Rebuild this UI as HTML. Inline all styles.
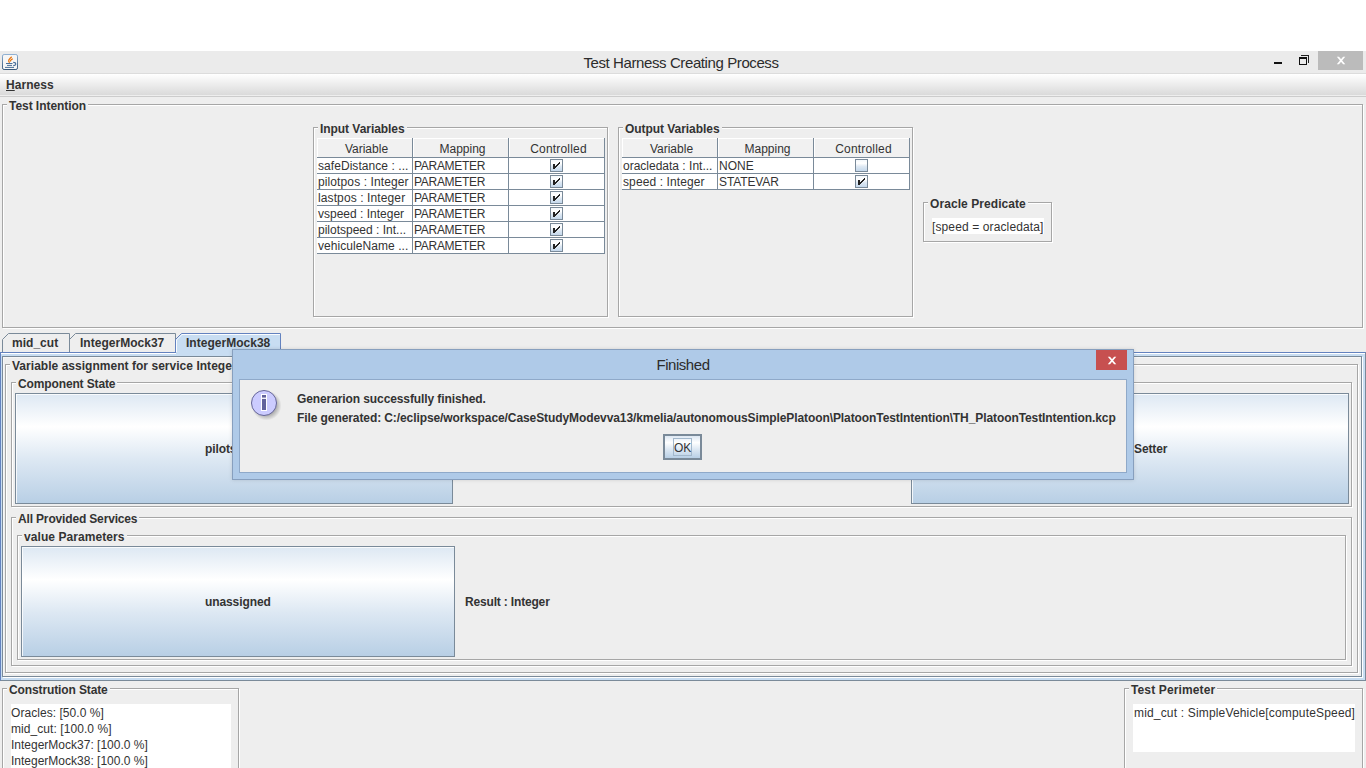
<!DOCTYPE html>
<html><head><meta charset="utf-8"><title>Test Harness Creating Process</title>
<style>
html,body{margin:0;padding:0;}
body{width:1366px;height:768px;overflow:hidden;background:#fff;position:relative;font:12px/16px "Liberation Sans",Arial,sans-serif;color:#333;}
div,span{box-sizing:border-box;}
.a{position:absolute;}
.win{position:absolute;left:0;top:51px;width:1366px;height:717px;background:#eee;}
.titlebar{position:absolute;left:0;top:51px;width:1366px;height:22px;background:#ebebeb;}
.wtitle{position:absolute;left:0;width:1362px;top:53px;text-align:center;font:15px/20px "Liberation Sans",Arial,sans-serif;color:#2c2c2c;letter-spacing:-0.4px;}
.menubar{position:absolute;left:0;top:73px;width:1366px;height:24px;background:linear-gradient(to bottom,#dcdcdc 0,#dcdcdc 1px,#ffffff 1px,#dadada 22px,#eeeeee 22px,#eeeeee 23px,#cccccc 23px);}
.g{position:absolute;border:1px solid #a6a6a6;box-shadow:1px 1px 0 #fff, inset 1px 1px 0 #fff;}
.t{position:absolute;letter-spacing:-0.05px;font-weight:bold;white-space:nowrap;background:#eee;padding:0 2px;height:16px;}
.b{position:absolute;letter-spacing:-0.1px;font-weight:bold;white-space:nowrap;}
.p{position:absolute;white-space:nowrap;}
.tbl{position:absolute;width:288px;}
.hdr{position:absolute;left:0;top:0;width:288px;height:20px;}
.h{position:absolute;top:0;height:20px;width:96px;text-align:center;line-height:16px;padding-top:3px;padding-left:4px;border-right:1px solid #7a8a99;border-bottom:1px solid #7a8a99;background:#f1f1f1;box-shadow:inset 1px 1px 0 #fff;}
.row{position:absolute;left:0;width:288px;height:16px;}
.c{position:absolute;top:0;height:16px;width:96px;background:#fff;border-right:1px solid #7a8a99;border-bottom:1px solid #7a8a99;padding-left:1px;white-space:nowrap;overflow:hidden;line-height:16px;}
.c1{left:0;} .c2{left:96px;} .c3{left:192px;}
.cb{position:absolute;left:41px;top:1px;width:13px;height:13px;border:1px solid #7a8a99;background:linear-gradient(to bottom,#f4f8fc 0%,#ffffff 30%,#dde8f3 60%,#c4d8ec 100%);}
.cb svg{position:absolute;left:-1px;top:-1px;}
.btn{position:absolute;border:1px solid #7a8a99;background:linear-gradient(to bottom,#dde8f3 0%,#ffffff 30%,#dde8f3 60%,#b8cfe5 100%);box-shadow:inset 1px 1px 0 rgba(255,255,255,.8);}
.white{position:absolute;background:#fff;}
</style></head><body>
<div class="win"></div>
<div class="titlebar"></div>
<!-- java icon -->
<svg class="a" style="left:0;top:50px" width="24" height="24" viewBox="0 50 24 24">
<defs><linearGradient id="jb" x1="0" y1="0" x2="0" y2="1"><stop offset="0" stop-color="#8fb0d2"/><stop offset="1" stop-color="#37587a"/></linearGradient></defs>
<rect x="2.5" y="54.5" width="15" height="15" rx="1.6" ry="1.6" fill="#f6f6f6" stroke="url(#jb)" stroke-width="1"/>
<path d="M9.6 62.8C7.8 61 8.6 59.4 11.7 56.7M10.6 61.6C10 60.2 11 59.6 12.8 58.8" stroke="#e8730a" stroke-width="1.25" fill="none"/>
<path d="M6 63.5h6.5M7 65.4h5M5 67.4h9" stroke="#4a7099" stroke-width="1" fill="none"/>
<path d="M13.2 62.4C16.6 62.5 16.6 65.5 13.2 65.6" stroke="#4a7099" stroke-width="1.1" fill="none"/>
</svg>
<div class="wtitle">Test Harness Creating Process</div>
<!-- window controls -->
<div class="a" style="left:1274px;top:62px;width:8px;height:2px;background:#111;"></div>
<div class="a" style="left:1301px;top:55px;width:8px;height:8px;border-top:1px solid #222;border-right:1px solid #222;"></div>
<div class="a" style="left:1299px;top:57px;width:8px;height:8px;border:1px solid #111;border-top-width:2px;background:#ebebeb;"></div>
<div class="a" style="left:1318px;top:51px;width:45px;height:19px;background:#bbbbbb;"></div>
<svg class="a" style="left:1335px;top:55px" width="12" height="12" viewBox="1335 55 12 12"><path d="M1336.8 56.8h2.2l6.3 7.4h-2.2zM1343.1 56.8h2.2l-6.3 7.4h-2.2z" fill="#fff"/></svg>
<div class="menubar"></div>
<div class="b" style="left:6px;top:77px;letter-spacing:.06px"><span style="text-decoration:underline">H</span>arness</div>

<!-- Test Intention -->
<div class="g" style="left:2px;top:104px;width:1361px;height:224px;"></div>
<div class="t" style="left:7px;top:98px;">Test Intention</div>
<div class="g" style="left:313px;top:127px;width:295px;height:190px;"></div>
<div class="t" style="left:318px;top:121px;">Input Variables</div>
<div class="tbl" style="left:317px;top:138px;"><div class="hdr"><div class="h c1">Variable</div><div class="h c2">Mapping</div><div class="h c3" style="letter-spacing:.2px">Controlled</div></div><div class="row" style="top:20px"><div class="c c1" style="letter-spacing:0.06px">safeDistance : ...</div><div class="c c2" style="letter-spacing:-0.3px">PARAMETER</div><div class="c c3"><span class="cb"><svg width="13" height="13" viewBox="0 0 13 13"><path d="M3 5h2v5h-2zM5 7h1v2h-1zM6 6h1v2h-1zM7 5h1v2h-1zM8 4h1v2h-1zM9 3h1v2h-1z" fill="#222"/></svg></span></div></div>
<div class="row" style="top:36px"><div class="c c1" style="letter-spacing:0.11px">pilotpos : Integer</div><div class="c c2" style="letter-spacing:-0.3px">PARAMETER</div><div class="c c3"><span class="cb"><svg width="13" height="13" viewBox="0 0 13 13"><path d="M3 5h2v5h-2zM5 7h1v2h-1zM6 6h1v2h-1zM7 5h1v2h-1zM8 4h1v2h-1zM9 3h1v2h-1z" fill="#222"/></svg></span></div></div>
<div class="row" style="top:52px"><div class="c c1" style="letter-spacing:0.11px">lastpos : Integer</div><div class="c c2" style="letter-spacing:-0.3px">PARAMETER</div><div class="c c3"><span class="cb"><svg width="13" height="13" viewBox="0 0 13 13"><path d="M3 5h2v5h-2zM5 7h1v2h-1zM6 6h1v2h-1zM7 5h1v2h-1zM8 4h1v2h-1zM9 3h1v2h-1z" fill="#222"/></svg></span></div></div>
<div class="row" style="top:68px"><div class="c c1">vspeed : Integer</div><div class="c c2" style="letter-spacing:-0.3px">PARAMETER</div><div class="c c3"><span class="cb"><svg width="13" height="13" viewBox="0 0 13 13"><path d="M3 5h2v5h-2zM5 7h1v2h-1zM6 6h1v2h-1zM7 5h1v2h-1zM8 4h1v2h-1zM9 3h1v2h-1z" fill="#222"/></svg></span></div></div>
<div class="row" style="top:84px"><div class="c c1">pilotspeed : Int...</div><div class="c c2" style="letter-spacing:-0.3px">PARAMETER</div><div class="c c3"><span class="cb"><svg width="13" height="13" viewBox="0 0 13 13"><path d="M3 5h2v5h-2zM5 7h1v2h-1zM6 6h1v2h-1zM7 5h1v2h-1zM8 4h1v2h-1zM9 3h1v2h-1z" fill="#222"/></svg></span></div></div>
<div class="row" style="top:100px"><div class="c c1" style="letter-spacing:0.06px">vehiculeName ...</div><div class="c c2" style="letter-spacing:-0.3px">PARAMETER</div><div class="c c3"><span class="cb"><svg width="13" height="13" viewBox="0 0 13 13"><path d="M3 5h2v5h-2zM5 7h1v2h-1zM6 6h1v2h-1zM7 5h1v2h-1zM8 4h1v2h-1zM9 3h1v2h-1z" fill="#222"/></svg></span></div></div></div>
<div class="g" style="left:618px;top:127px;width:295px;height:190px;"></div>
<div class="t" style="left:623px;top:121px;">Output Variables</div>
<div class="tbl" style="left:622px;top:138px;"><div class="hdr"><div class="h c1">Variable</div><div class="h c2">Mapping</div><div class="h c3" style="letter-spacing:.2px">Controlled</div></div><div class="row" style="top:20px"><div class="c c1">oracledata : Int...</div><div class="c c2">NONE</div><div class="c c3"><span class="cb"></span></div></div>
<div class="row" style="top:36px"><div class="c c1" style="letter-spacing:0.11px">speed : Integer</div><div class="c c2" style="letter-spacing:-0.12px">STATEVAR</div><div class="c c3"><span class="cb"><svg width="13" height="13" viewBox="0 0 13 13"><path d="M3 5h2v5h-2zM5 7h1v2h-1zM6 6h1v2h-1zM7 5h1v2h-1zM8 4h1v2h-1zM9 3h1v2h-1z" fill="#222"/></svg></span></div></div></div>
<div class="g" style="left:923px;top:202px;width:129px;height:40px;"></div>
<div class="t" style="left:928px;top:196px;letter-spacing:.07px">Oracle Predicate</div>
<div class="white" style="left:932px;top:218px;width:112px;height:16px;"></div>
<div class="p" style="left:932px;top:219px;letter-spacing:.12px">[speed = oracledata]</div>

<!-- tabs -->
<svg class="a" style="left:0;top:330px" width="300" height="27" viewBox="0 330 300 27">
<path d="M175.5 356V339.5l6-6H280.5V356z" fill="#c8ddf2"/>
<path d="M2.5 352V339.5l6-6H69.5V352" fill="none" stroke="#7a8a99"/>
<path d="M69.5 339.5l6-6H175.5V352" fill="none" stroke="#7a8a99"/>
<path d="M175.5 352V339.5l6-6H280.5V352" fill="none" stroke="#6382bf"/>
<path d="M176.5 352V340l5.5-5.5H280" fill="none" stroke="#fff" stroke-opacity=".9"/>
</svg>
<div class="b" style="left:12px;top:335px;letter-spacing:.02px">mid_cut</div>
<div class="b" style="left:80px;top:335px;letter-spacing:.02px">IntegerMock37</div>
<div class="b" style="left:186px;top:335px;letter-spacing:.02px">IntegerMock38</div>
<!-- tab content -->
<div class="a" style="left:0;top:352px;width:1366px;height:329px;background:#c8ddf2;border:1px solid #7a8a99;border-top-color:#6382bf;border-left-color:#6382bf;"></div>
<div class="a" style="left:1px;top:353px;width:1364px;height:1px;background:#fff;"></div>
<div class="a" style="left:176px;top:352px;width:105px;height:2px;background:#c8ddf2;"></div>
<div class="a" style="left:280px;top:352px;width:1px;height:1px;background:#6382bf;"></div>
<div class="a" style="left:2px;top:356px;width:1360px;height:321px;background:#eee;border:1px solid #7a8a99;box-shadow:1px 1px 0 #fff, inset 1px 1px 0 #f7f7f7;"></div>
<div class="g" style="left:5px;top:364px;width:1353px;height:309px;"></div>
<div class="t" style="left:10px;top:358px;letter-spacing:.03px">Variable assignment for service IntegerMock38</div>
<div class="g" style="left:11px;top:382px;width:1341px;height:125px;"></div>
<div class="t" style="left:16px;top:376px;letter-spacing:-.13px">Component State</div>
<div class="btn" style="left:15px;top:393px;width:438px;height:111px;"></div>
<div class="b" style="left:205px;top:441px;">pilotspeed</div>
<div class="btn" style="left:911px;top:393px;width:438px;height:111px;"></div>
<div class="b" style="left:1134px;top:441px;">Setter</div>
<div class="g" style="left:11px;top:517px;width:1341px;height:149px;"></div>
<div class="t" style="left:16px;top:511px;letter-spacing:-.16px">All Provided Services</div>
<div class="g" style="left:17px;top:535px;width:1329px;height:125px;"></div>
<div class="t" style="left:22px;top:529px;letter-spacing:.07px">value Parameters</div>
<div class="btn" style="left:21px;top:546px;width:434px;height:111px;"></div>
<div class="b" style="left:205px;top:594px;">unassigned</div>
<div class="b" style="left:465px;top:594px;letter-spacing:-.17px">Result : Integer</div>

<!-- bottom panels -->
<div class="g" style="left:2px;top:688px;width:237px;height:100px;"></div>
<div class="t" style="left:7px;top:682px;letter-spacing:-.12px">Constrution State</div>
<div class="white" style="left:11px;top:704px;width:220px;height:70px;"></div>
<div class="p" style="left:11px;top:705px;letter-spacing:.05px">Oracles: [50.0 %]</div>
<div class="p" style="left:11px;top:721px;letter-spacing:.07px">mid_cut: [100.0 %]</div>
<div class="p" style="left:11px;top:737px;">IntegerMock37: [100.0 %]</div>
<div class="p" style="left:11px;top:753px;">IntegerMock38: [100.0 %]</div>
<div class="g" style="left:1124px;top:688px;width:239px;height:100px;"></div>
<div class="t" style="left:1129px;top:682px;letter-spacing:.13px">Test Perimeter</div>
<div class="white" style="left:1133px;top:704px;width:222px;height:48px;"></div>
<div class="p" style="left:1134px;top:705px;letter-spacing:.17px">mid_cut : SimpleVehicle[computeSpeed]</div>

<!-- dialog -->
<div class="a" style="left:232px;top:349px;width:902px;height:131px;background:#afcae8;border:1px solid #879fbe;box-shadow:0 0 4px rgba(0,0,0,.13);"></div>
<div class="a" style="left:239px;top:379px;width:888px;height:94px;background:#eee;border:1px solid #8fa9c9;"></div>
<div class="a" style="left:232px;width:902px;top:355px;text-align:center;font:15px/20px 'Liberation Sans',Arial,sans-serif;color:#2c2c2c;letter-spacing:-0.45px">Finished</div>
<div class="a" style="left:1096px;top:350px;width:31px;height:20px;background:#c75050;"></div>
<svg class="a" style="left:1106px;top:355px" width="12" height="12" viewBox="1106 355 12 12"><path d="M1107.8 356.8h2.2l6.3 7.4h-2.2zM1114.1 356.8h2.2l-6.3 7.4h-2.2z" fill="#fff"/></svg>
<!-- info icon -->
<svg class="a" style="left:246px;top:385px" width="40" height="40" viewBox="246 385 40 40">
<defs><radialGradient id="sh" cx="50%" cy="50%" r="50%"><stop offset="0.6" stop-color="#000" stop-opacity=".3"/><stop offset="1" stop-color="#000" stop-opacity="0"/></radialGradient></defs>
<circle cx="266.5" cy="405.5" r="15" fill="url(#sh)"/>
<circle cx="264" cy="403" r="12.5" fill="#ccccff" stroke="#66669a" stroke-width="1"/>
<rect x="261" y="394" width="6" height="17" fill="#fff"/>
<rect x="262" y="395" width="4" height="2.6" fill="#62639c"/>
<rect x="262" y="398.9" width="4" height="11.1" fill="#62639c"/>
</svg>
<div class="b" style="left:297px;top:391px;">Generarion successfully finished.</div>
<div class="b" style="left:297px;top:410px;letter-spacing:-0.087px">File generated: C:/eclipse/workspace/CaseStudyModevva13/kmelia/autonomousSimplePlatoon\PlatoonTestIntention\TH_PlatoonTestIntention.kcp</div>
<div class="btn" style="left:663px;top:434px;width:39px;height:26px;border:2px solid #7a8a99;box-shadow:none;"></div>
<div class="a" style="left:673px;top:438px;width:19px;height:18px;border:1px solid #a3b8cc;"></div>
<div class="p" style="left:674px;top:440px;">OK</div>
</body></html>
